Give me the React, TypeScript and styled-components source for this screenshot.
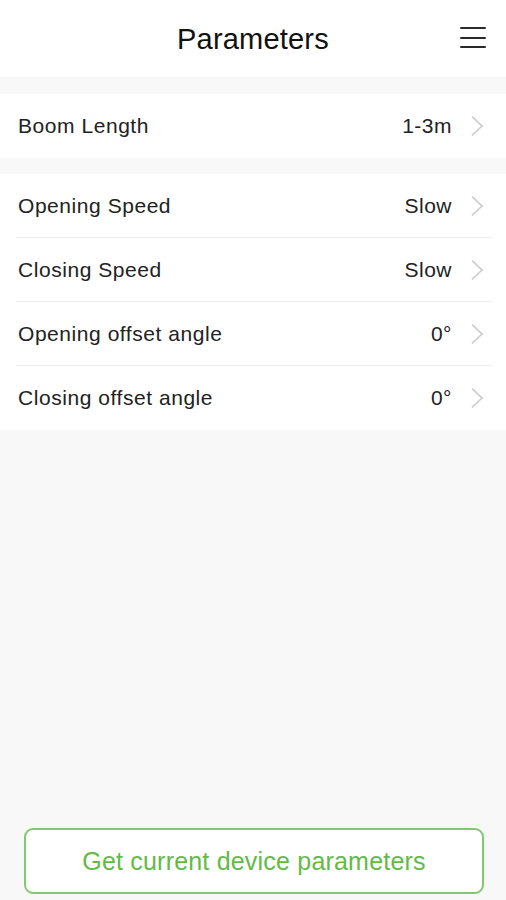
import React from "react";
import styled, { createGlobalStyle } from "styled-components";

const rows = [
  { label: "Opening Speed", value: "Slow" },
  { label: "Closing Speed", value: "Slow" },
  { label: "Opening offset angle", value: "0°" },
  { label: "Closing offset angle", value: "0°" },
];

const Chevron = () => (
  <svg width="14" height="22" viewBox="0 0 14 22" fill="none">
    <path d="M2 1.5L12 11L2 20.5" stroke="#c9c9c9" strokeWidth="1.6" />
  </svg>
);

const Row = ({ label, value, last }: { label: string; value: string; last?: boolean }) => (
  <RowWrap $last={last}>
    <Label>{label}</Label>
    <Value>{value}</Value>
    <Chevron />
  </RowWrap>
);

const App = () => {
  return (
    <Page>
      <GlobalStyle />
      <Header>
        <Title>Parameters</Title>
        <MenuButton aria-label="menu">
          <span />
          <span />
          <span />
        </MenuButton>
      </Header>
      <Group>
        <Row label="Boom Length" value="1-3m" last />
      </Group>
      <Group>
        {rows.map((r, i) => (
          <Row key={r.label} label={r.label} value={r.value} last={i === rows.length - 1} />
        ))}
      </Group>
      <Spacer />
      <Footer>
        <ActionButton>Get current device parameters</ActionButton>
      </Footer>
    </Page>
  );
};

const GlobalStyle = createGlobalStyle`
  html, body {
    margin: 0;
    padding: 0;
    background: #f8f8f8;
    font-family: "Liberation Sans", Arial, sans-serif;
  }
`;

const Page = styled.div`
  display: flex;
  flex-direction: column;
  min-height: 100vh;
  background: #f8f8f8;
`;

const Header = styled.header`
  position: relative;
  height: 77px;
  background: #fff;
  display: flex;
  align-items: center;
  justify-content: center;
`;

const Title = styled.h1`
  margin: 0;
  font-size: 29px;
  font-weight: 400;
  color: #111;
  letter-spacing: 0.2px;
  transform: translateY(1px);
`;

const MenuButton = styled.button`
  position: absolute;
  right: 20px;
  top: 27px;
  width: 26px;
  height: 21px;
  padding: 0;
  border: 0;
  background: none;
  display: flex;
  flex-direction: column;
  justify-content: space-between;

  span {
    display: block;
    height: 2px;
    background: #2a2a2a;
    border-radius: 1px;
  }
`;

const Group = styled.section`
  margin-top: 17px;
  background: #fff;

  & + & {
    margin-top: 16px;
  }
`;

const RowWrap = styled.div<{ $last?: boolean }>`
  position: relative;
  height: 64px;
  display: flex;
  align-items: center;
  padding: 0 22px 0 18px;

  &::after {
    content: "";
    display: ${(p) => (p.$last ? "none" : "block")};
    position: absolute;
    left: 16px;
    right: 14px;
    bottom: 0;
    height: 1px;
    background: #efefef;
  }
`;

const Label = styled.span`
  flex: 1;
  font-size: 21px;
  letter-spacing: 0.55px;
  color: #222;
`;

const Value = styled.span`
  font-size: 21px;
  letter-spacing: 0.5px;
  color: #222;
  margin-right: 18px;
`;

const Spacer = styled.div`
  flex: 1;
`;

const Footer = styled.footer`
  padding: 0 22px 6px 24px;
`;

const ActionButton = styled.button`
  width: 100%;
  height: 66px;
  border: 2px solid #7fca6b;
  border-radius: 9px;
  background: #fff;
  color: #62bb45;
  font-family: "Liberation Sans", Arial, sans-serif;
  font-size: 25px;
  letter-spacing: 0.2px;
`;

export default App;
